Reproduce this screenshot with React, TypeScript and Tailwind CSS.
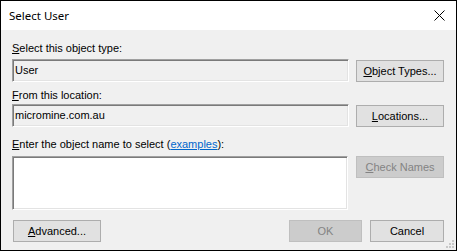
import React from 'react'

const font = { fontFamily: '"Liberation Sans", Arial, sans-serif' }

function Btn({
  children,
  disabled,
  className = '',
}: {
  children: React.ReactNode
  disabled?: boolean
  className?: string
}) {
  return (
    <div
      className={`flex h-[22px] items-center justify-center border text-[11px] leading-[13px] ${
        disabled ? 'border-[#bfbfbf] bg-[#cccccc] text-[#838383]' : 'border-[#adadad] bg-[#e1e1e1] text-black'
      } ${className}`}
    >
      {children}
    </div>
  )
}

function SunkenBox({ children, white, className = '' }: { children?: React.ReactNode; white?: boolean; className?: string }) {
  return (
    <div
      className={`border border-t-[#a0a0a0] border-l-[#a0a0a0] border-r-white border-b-white shadow-[inset_1px_1px_0_#7a7a7a,inset_-1px_-1px_0_#e3e3e3] ${
        white ? 'bg-white' : 'bg-[#f0f0f0]'
      } ${className}`}
    >
      {children}
    </div>
  )
}

export default function App() {
  return (
    <div className="flex h-[251px] w-[457px] flex-col border border-black bg-[#f0f0f0] text-black" style={font}>
      {/* Title bar */}
      <div className="flex h-[29px] shrink-0 items-center justify-between bg-white pl-[8px] pr-[10px]">
        <span className="text-[11.5px] leading-[16px]" style={{ fontFamily: '"Noto Sans", "Open Sans", sans-serif' }}>
          Select User
        </span>
        <svg width="11" height="11" viewBox="0 0 11 11" className="mr-[1px]">
          <path d="M0.5 0.5L10.5 10.5M10.5 0.5L0.5 10.5" stroke="#000" strokeWidth="1" />
        </svg>
      </div>

      {/* Body */}
      <div className="relative flex flex-1 flex-col pl-[11px] pr-[12px]">
        <div className="mt-[12px] h-[13px] text-[11px] leading-[13px]">
          <u>S</u>elect this object type:
        </div>
        <div className="mt-[4px] flex items-start">
          <SunkenBox className="h-[23px] w-[337px] pl-[2px] pt-[1px] text-[11px] leading-[19px]">User</SunkenBox>
          <Btn className="ml-[7px] mt-[1px] w-[88px]">
            <span>
              <u>O</u>bject Types...
            </span>
          </Btn>
        </div>

        <div className="mt-[7px] h-[13px] text-[11px] leading-[13px]">
          <u>F</u>rom this location:
        </div>
        <div className="mt-[2px] flex items-start">
          <SunkenBox className="h-[23px] w-[337px] pl-[2px] pt-[1px] text-[11px] leading-[19px]">micromine.com.au</SunkenBox>
          <Btn className="ml-[7px] mt-[1px] w-[88px]">
            <span>
              <u>L</u>ocations...
            </span>
          </Btn>
        </div>

        <div className="mt-[11px] h-[13px] text-[11px] leading-[13px]">
          <u>E</u>nter the object name to select (<span className="text-[#0066cc] underline">examples</span>):
        </div>
        <div className="mt-[5px] flex items-start">
          <SunkenBox white className="h-[54px] w-[336px]" />
          <Btn disabled className="ml-[8px] w-[88px]">
            <span>
              <u>C</u>heck Names
            </span>
          </Btn>
        </div>

        <div className="mt-[10px] flex items-start">
          <Btn className="ml-[1px] w-[88px]">
            <span>
              <u>A</u>dvanced...
            </span>
          </Btn>
          <div className="flex-1" />
          <Btn disabled className="w-[73px]">
            OK
          </Btn>
          <Btn className="ml-[8px] w-[74px]">Cancel</Btn>
        </div>

        {/* size grip */}
        <svg width="9" height="9" viewBox="0 0 9 9" className="absolute bottom-[1px] right-[1px]">
          <rect x="6" y="0" width="2" height="2" fill="#c8c8c8" />
          <rect x="3" y="3" width="2" height="2" fill="#c8c8c8" />
          <rect x="6" y="3" width="2" height="2" fill="#c8c8c8" />
          <rect x="0" y="6" width="2" height="2" fill="#c8c8c8" />
          <rect x="3" y="6" width="2" height="2" fill="#c8c8c8" />
          <rect x="6" y="6" width="2" height="2" fill="#c8c8c8" />
        </svg>
      </div>
    </div>
  )
}
